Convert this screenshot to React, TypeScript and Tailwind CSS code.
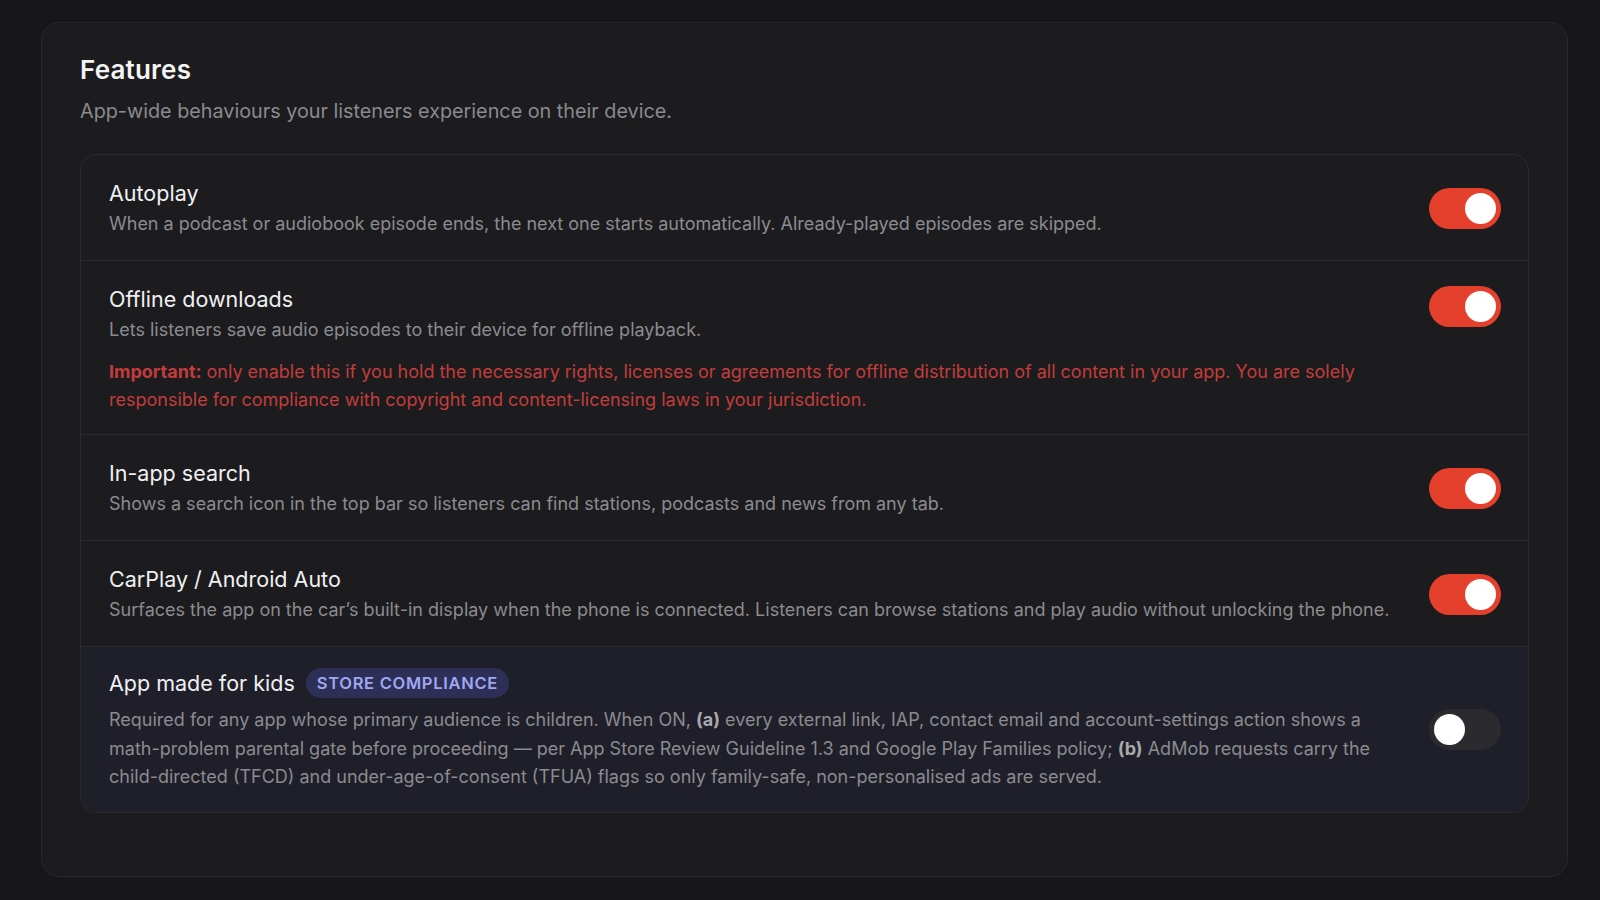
import React, { useState } from "react";

function Toggle({ on }: { on: boolean }) {
  const [v, setV] = useState(on);
  return (
    <button
      type="button"
      onClick={() => setV(!v)}
      className={
        "relative shrink-0 w-[72px] h-[41px] rounded-full transition-colors " +
        (v ? "bg-[#e5402b]" : "bg-[#2a2a2f]")
      }
    >
      <span
        className={
          "absolute top-[5px] w-[31px] h-[31px] rounded-full bg-white " +
          (v ? "left-[36px]" : "left-[5px]")
        }
      />
    </button>
  );
}

export default function App() {
  return (
    <div
      className="min-h-[900px] w-full bg-[#171719] pt-[22px] pl-[41px] pr-[32px]"
      style={{ fontFamily: "Inter, 'Noto Sans', sans-serif" }}
    >
      <div className="rounded-[18px] border border-[#28282b] bg-[#1c1c1e] px-[38px] pt-[31px] pb-[63px]">
        <h2 className="text-[26px] leading-[32px] font-semibold text-[#f4f4f5] tracking-[0.2px]">
          Features
        </h2>
        <p className="mt-[11px] text-[19.8px] leading-[28px] text-[#8a8a8f]">
          App-wide behaviours your listeners experience on their device.
        </p>

        <div className="mt-[29px] rounded-[16px] border border-[#2a2a2d] overflow-hidden">
          {/* Autoplay */}
          <div className="flex items-center gap-[28px] pl-[28px] pr-[27px] pt-[24px] pb-[22px] border-b border-[#2a2a2d]">
            <div className="flex-1">
              <div className="text-[21.5px] leading-[28px] text-[#f0f0f2]">Autoplay</div>
              <div className="mt-[3px] text-[18px] leading-[28px] text-[#8b8b90]">
                When a podcast or audiobook episode ends, the next one starts automatically. Already-played episodes are skipped.
              </div>
            </div>
            <Toggle on={true} />
          </div>

          {/* Offline downloads */}
          <div className="pl-[28px] pr-[27px] pt-[24px] pb-[21px] border-b border-[#2a2a2d]">
            <div className="flex items-start gap-[28px]">
              <div className="flex-1">
                <div className="text-[21.5px] leading-[28px] text-[#f0f0f2]">Offline downloads</div>
                <div className="mt-[3px] text-[18px] leading-[28px] text-[#8b8b90]">
                  Lets listeners save audio episodes to their device for offline playback.
                </div>
              </div>
              <div className="mt-[1px]">
                <Toggle on={true} />
              </div>
            </div>
            <p className="mt-[14px] pr-[100px] text-[18px] leading-[27.5px] text-[#c23c3b]">
              <strong className="font-bold">Important:</strong> only enable this if you hold the necessary rights, licenses or agreements for offline distribution of all content in your app. You are solely responsible for compliance with copyright and content-licensing laws in your jurisdiction.
            </p>
          </div>

          {/* In-app search */}
          <div className="flex items-center gap-[28px] pl-[28px] pr-[27px] pt-[24px] pb-[22px] border-b border-[#2a2a2d]">
            <div className="flex-1">
              <div className="text-[21.5px] leading-[28px] text-[#f0f0f2]">In-app search</div>
              <div className="mt-[3px] text-[18px] leading-[28px] text-[#8b8b90]">
                Shows a search icon in the top bar so listeners can find stations, podcasts and news from any tab.
              </div>
            </div>
            <Toggle on={true} />
          </div>

          {/* CarPlay */}
          <div className="flex items-center gap-[28px] pl-[28px] pr-[27px] pt-[24px] pb-[22px] border-b border-[#2a2a2d]">
            <div className="flex-1">
              <div className="text-[21.5px] leading-[28px] text-[#f0f0f2]">CarPlay / Android Auto</div>
              <div className="mt-[3px] text-[18px] leading-[28px] text-[#8b8b90]">
                Surfaces the app on the car’s built-in display when the phone is connected. Listeners can browse stations and play audio without unlocking the phone.
              </div>
            </div>
            <Toggle on={true} />
          </div>

          {/* Kids */}
          <div className="flex items-center gap-[28px] pl-[28px] pr-[27px] pt-[21px] pb-[20px] bg-[#1f1f29]">
            <div className="flex-1">
              <div className="flex items-center gap-[11px]">
                <span className="text-[21.5px] leading-[28px] text-[#f0f0f2]">App made for kids</span>
                <span className="inline-flex items-center h-[30px] px-[11px] rounded-full bg-[#2d2f56] text-[16.5px] font-semibold tracking-[0.7px] text-[#a0a7f2]">
                  STORE COMPLIANCE
                </span>
              </div>
              <div className="mt-[8px] text-[18px] leading-[28.5px] text-[#8b8b90]">
                Required for any app whose primary audience is children. When ON, <strong className="font-bold text-[#a8a8ad]">(a)</strong> every external link, IAP, contact email and account-settings action shows a <span className="whitespace-nowrap">math-problem</span> parental gate before proceeding — per App Store Review Guideline 1.3 and Google Play Families policy; <strong className="font-bold text-[#a8a8ad]">(b)</strong> AdMob requests carry the <span className="whitespace-nowrap">child-directed</span> (TFCD) and under-age-of-consent (TFUA) flags so only family-safe, non-personalised ads are served.
              </div>
            </div>
            <Toggle on={false} />
          </div>
        </div>
      </div>
    </div>
  );
}
